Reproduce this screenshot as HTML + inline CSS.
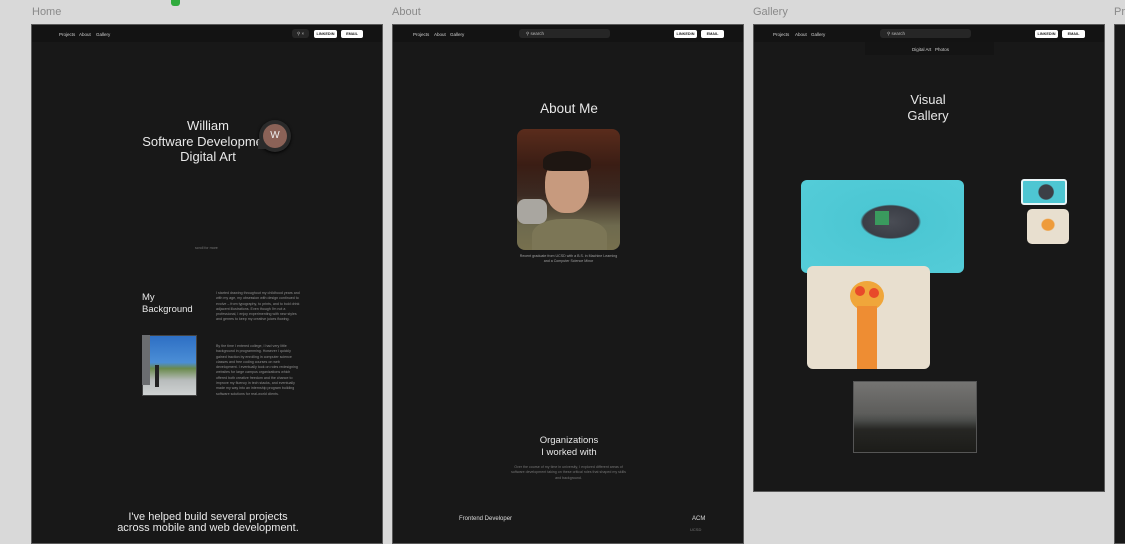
<!DOCTYPE html>
<html><head><meta charset="utf-8"><style>
*{margin:0;padding:0;box-sizing:border-box}
body{width:1125px;height:531px;background:#d9d9d9;position:relative;overflow:hidden;font-family:"Liberation Sans",sans-serif}
.a{position:absolute}
.lbl{font-size:11px;color:#8a8a8a;top:5px}
.fr{background:#181818;top:24px;border:1px solid #5a5a5a}
.nav{left:0;right:0;top:0;height:17px;background:#131313}
.t{color:#e8e8e8;white-space:nowrap}
.nl{font-size:4.5px;color:#cfcfcf;top:7px}
.btn{background:#fff;border-radius:2px;height:8px;font-size:3.8px;font-weight:bold;color:#222;text-align:center;line-height:8px;top:5px}
.sr{background:#262626;border-radius:3px;height:9px;top:4px;font-size:4.5px;color:#bbb;line-height:9px;padding-left:7px}
.p{font-size:3.6px;line-height:5.3px;color:#8f8f8f}
</style></head><body>
<div class="a" style="left:171px;top:-3px;width:9px;height:9px;border-radius:3px;background:#2faa3c"></div>
<div class="a lbl" style="left:32px;top:6px">Home</div>
<div class="a lbl" style="left:392px;top:6px">About</div>
<div class="a lbl" style="left:753px;top:6px">Gallery</div>
<div class="a lbl" style="left:1114px;top:6px">Pr</div>

<!-- Home -->
<div class="a fr" style="left:31px;width:352px;height:520px">
 <div class="a nav"></div>
 <div class="a nl" style="left:27px">Projects</div><div class="a nl" style="left:47px">About</div><div class="a nl" style="left:64px">Gallery</div>
 <div class="a sr" style="left:260px;width:17px;padding-left:5px">⚲ ×</div>
 <div class="a btn" style="left:282px;width:23px">LINKEDIN</div>
 <div class="a btn" style="left:309px;width:22px">EMAIL</div>
 <div class="a t" style="left:0;width:352px;top:93px;text-align:center;font-size:13px;line-height:15.5px">William<br>Software Development<br>Digital Art</div>
 <div class="a" style="left:227px;top:95px;width:32px;height:32px;border-radius:50%;background:#2a2a2a;box-shadow:0 1px 3px #000"></div>
 <div class="a" style="left:226px;top:115px;width:8px;height:9px;background:#2a2a2a"></div>
 <div class="a" style="left:231px;top:99px;width:24px;height:24px;border-radius:50%;background:#8b6257;color:#eee;font-size:10px;text-align:center;line-height:24px">W</div>
 <div class="a" style="left:163px;top:221px;font-size:3.6px;color:#777">scroll for more</div>
 <div class="a t" style="left:110px;top:267px;font-size:9.5px;line-height:12px">My<br>Background</div>
 <div class="a p" style="left:184px;top:266px;width:86px">I started drawing throughout my childhood years and with my age, my obsession with design continued to evolve – from typography, to prints, and to bold drink adjacent illustrations. Even though I'm not a professional, I enjoy experimenting with new styles and genres to keep my creative juices flowing.</div>
 <div class="a" style="left:110px;top:310px;width:55px;height:61px;border:1px solid #444;background:linear-gradient(180deg,#2e6fc4 0%,#4b8ed6 45%,#6a8a4c 55%,#b8bcbc 75%,#cfd2d2 100%)"></div>
 <div class="a" style="left:110px;top:310px;width:8px;height:50px;background:#6b6d70"></div>
 <div class="a" style="left:123px;top:340px;width:4px;height:22px;background:#222"></div>
 <div class="a p" style="left:184px;top:319px;width:86px">By the time I entered college, I had very little background in programming. However I quickly gained traction by enrolling in computer science classes and free coding courses on web development. I eventually took on roles redesigning websites for large campus organizations which offered both creative freedom and the chance to improve my fluency in tech stacks, and eventually made my way into an internship program building software solutions for real-world clients.</div>
 <div class="a t" style="left:0;width:352px;top:487px;text-align:center;font-size:11px;line-height:11px">I've helped build several projects<br>across mobile and web development.</div>
</div>

<!-- About -->
<div class="a fr" style="left:392px;width:352px;height:520px">
 <div class="a nav"></div>
 <div class="a nl" style="left:20px">Projects</div><div class="a nl" style="left:41px">About</div><div class="a nl" style="left:57px">Gallery</div>
 <div class="a sr" style="left:126px;width:91px">⚲ search</div>
 <div class="a btn" style="left:281px;width:23px">LINKEDIN</div>
 <div class="a btn" style="left:308px;width:23px">EMAIL</div>
 <div class="a t" style="left:0;width:352px;top:76px;text-align:center;font-size:13.5px">About Me</div>
 <div class="a" style="left:124px;top:104px;width:103px;height:121px;border-radius:8px;overflow:hidden;background:linear-gradient(180deg,#5a2c1c 0%,#3a1d14 30%,#3b2a22 55%,#6e6a4e 80%,#77704e 100%)">
  <div class="a" style="left:28px;top:28px;width:44px;height:56px;border-radius:45%;background:#c79a7e"></div>
  <div class="a" style="left:26px;top:22px;width:48px;height:20px;border-radius:50% 50% 20% 20%;background:#1e1612"></div>
  <div class="a" style="left:0;top:70px;width:30px;height:25px;background:#a9a6a0;border-radius:8px"></div>
  <div class="a" style="left:15px;top:90px;width:75px;height:40px;border-radius:40% 40% 0 0;background:#7c7656"></div>
 </div>
 <div class="a p" style="left:124px;top:229px;width:103px;text-align:center;color:#a0a0a0">Recent graduate from UCSD with a B.S. in Machine Learning and a Computer Science Minor</div>
 <div class="a t" style="left:0;width:352px;top:410px;text-align:center;font-size:9.5px;line-height:12px">Organizations<br>I worked with</div>
 <div class="a p" style="left:118px;top:440px;width:115px;text-align:center;color:#777">Over the course of my time in university, I explored different areas of software development taking on these critical roles that shaped my skills and background.</div>
 <div class="a t" style="left:66px;top:491px;font-size:6px;color:#ddd">Frontend Developer</div>
 <div class="a t" style="left:299px;top:491px;font-size:6px;color:#ddd">ACM</div>
 <div class="a" style="left:297px;top:502px;font-size:4px;color:#777">UCSD</div>
</div>

<!-- Gallery -->
<div class="a fr" style="left:753px;width:352px;height:468px">
 <div class="a nav"></div>
 <div class="a nl" style="left:19px">Projects</div><div class="a nl" style="left:41px">About</div><div class="a nl" style="left:57px">Gallery</div>
 <div class="a sr" style="left:126px;width:91px">⚲ search</div>
 <div class="a btn" style="left:281px;width:23px">LINKEDIN</div>
 <div class="a btn" style="left:308px;width:23px">EMAIL</div>
 <div class="a" style="left:111px;top:17px;width:129px;height:13px;background:#141414"></div>
 <div class="a nl" style="left:158px;top:22px">Digital Art</div><div class="a nl" style="left:181px;top:22px">Photos</div>
 <div class="a t" style="left:0;width:348px;top:67px;text-align:center;font-size:13px;line-height:15.5px">Visual<br>Gallery</div>
 <div class="a" style="left:47px;top:155px;width:163px;height:93px;border-radius:6px;background:radial-gradient(ellipse at 55% 45%,#4a4d55 0%,#3b3e46 22%,#4cc7d3 24%,#55cdd9 100%)">
  <div class="a" style="left:74px;top:31px;width:14px;height:14px;background:#3a9a5e"></div>
 </div>
 <div class="a" style="left:53px;top:241px;width:123px;height:103px;border-radius:6px;background:#e8dfcf;overflow:hidden">
  <div class="a" style="left:43px;top:15px;width:34px;height:30px;border-radius:50%;background:#f0a63a"></div>
  <div class="a" style="left:50px;top:40px;width:20px;height:70px;background:#ee8d33"></div>
  <div class="a" style="left:48px;top:20px;width:10px;height:10px;border-radius:50%;background:#e84a2a"></div>
  <div class="a" style="left:62px;top:22px;width:10px;height:10px;border-radius:50%;background:#e84a2a"></div>
 </div>
 <div class="a" style="left:267px;top:154px;width:46px;height:26px;border:2px solid #e8f4f6;border-radius:3px;background:radial-gradient(circle at 55% 50%,#3c3f46 0%,#3c3f46 28%,#4ec6d2 32%)"></div>
 <div class="a" style="left:273px;top:184px;width:42px;height:35px;border-radius:5px;background:radial-gradient(ellipse at 50% 45%,#ee9b3a 0%,#ee9b3a 20%,#e8dfcf 24%)"></div>
 <div class="a" style="left:99px;top:356px;width:124px;height:72px;border:1px solid #555;background:linear-gradient(180deg,#757472 0%,#5d5d5b 45%,#4a4c4a 55%,#262623 68%,#1c1c19 100%)"></div>
</div>

<div class="a fr" style="left:1114px;width:30px;height:520px"></div>
</body></html>
